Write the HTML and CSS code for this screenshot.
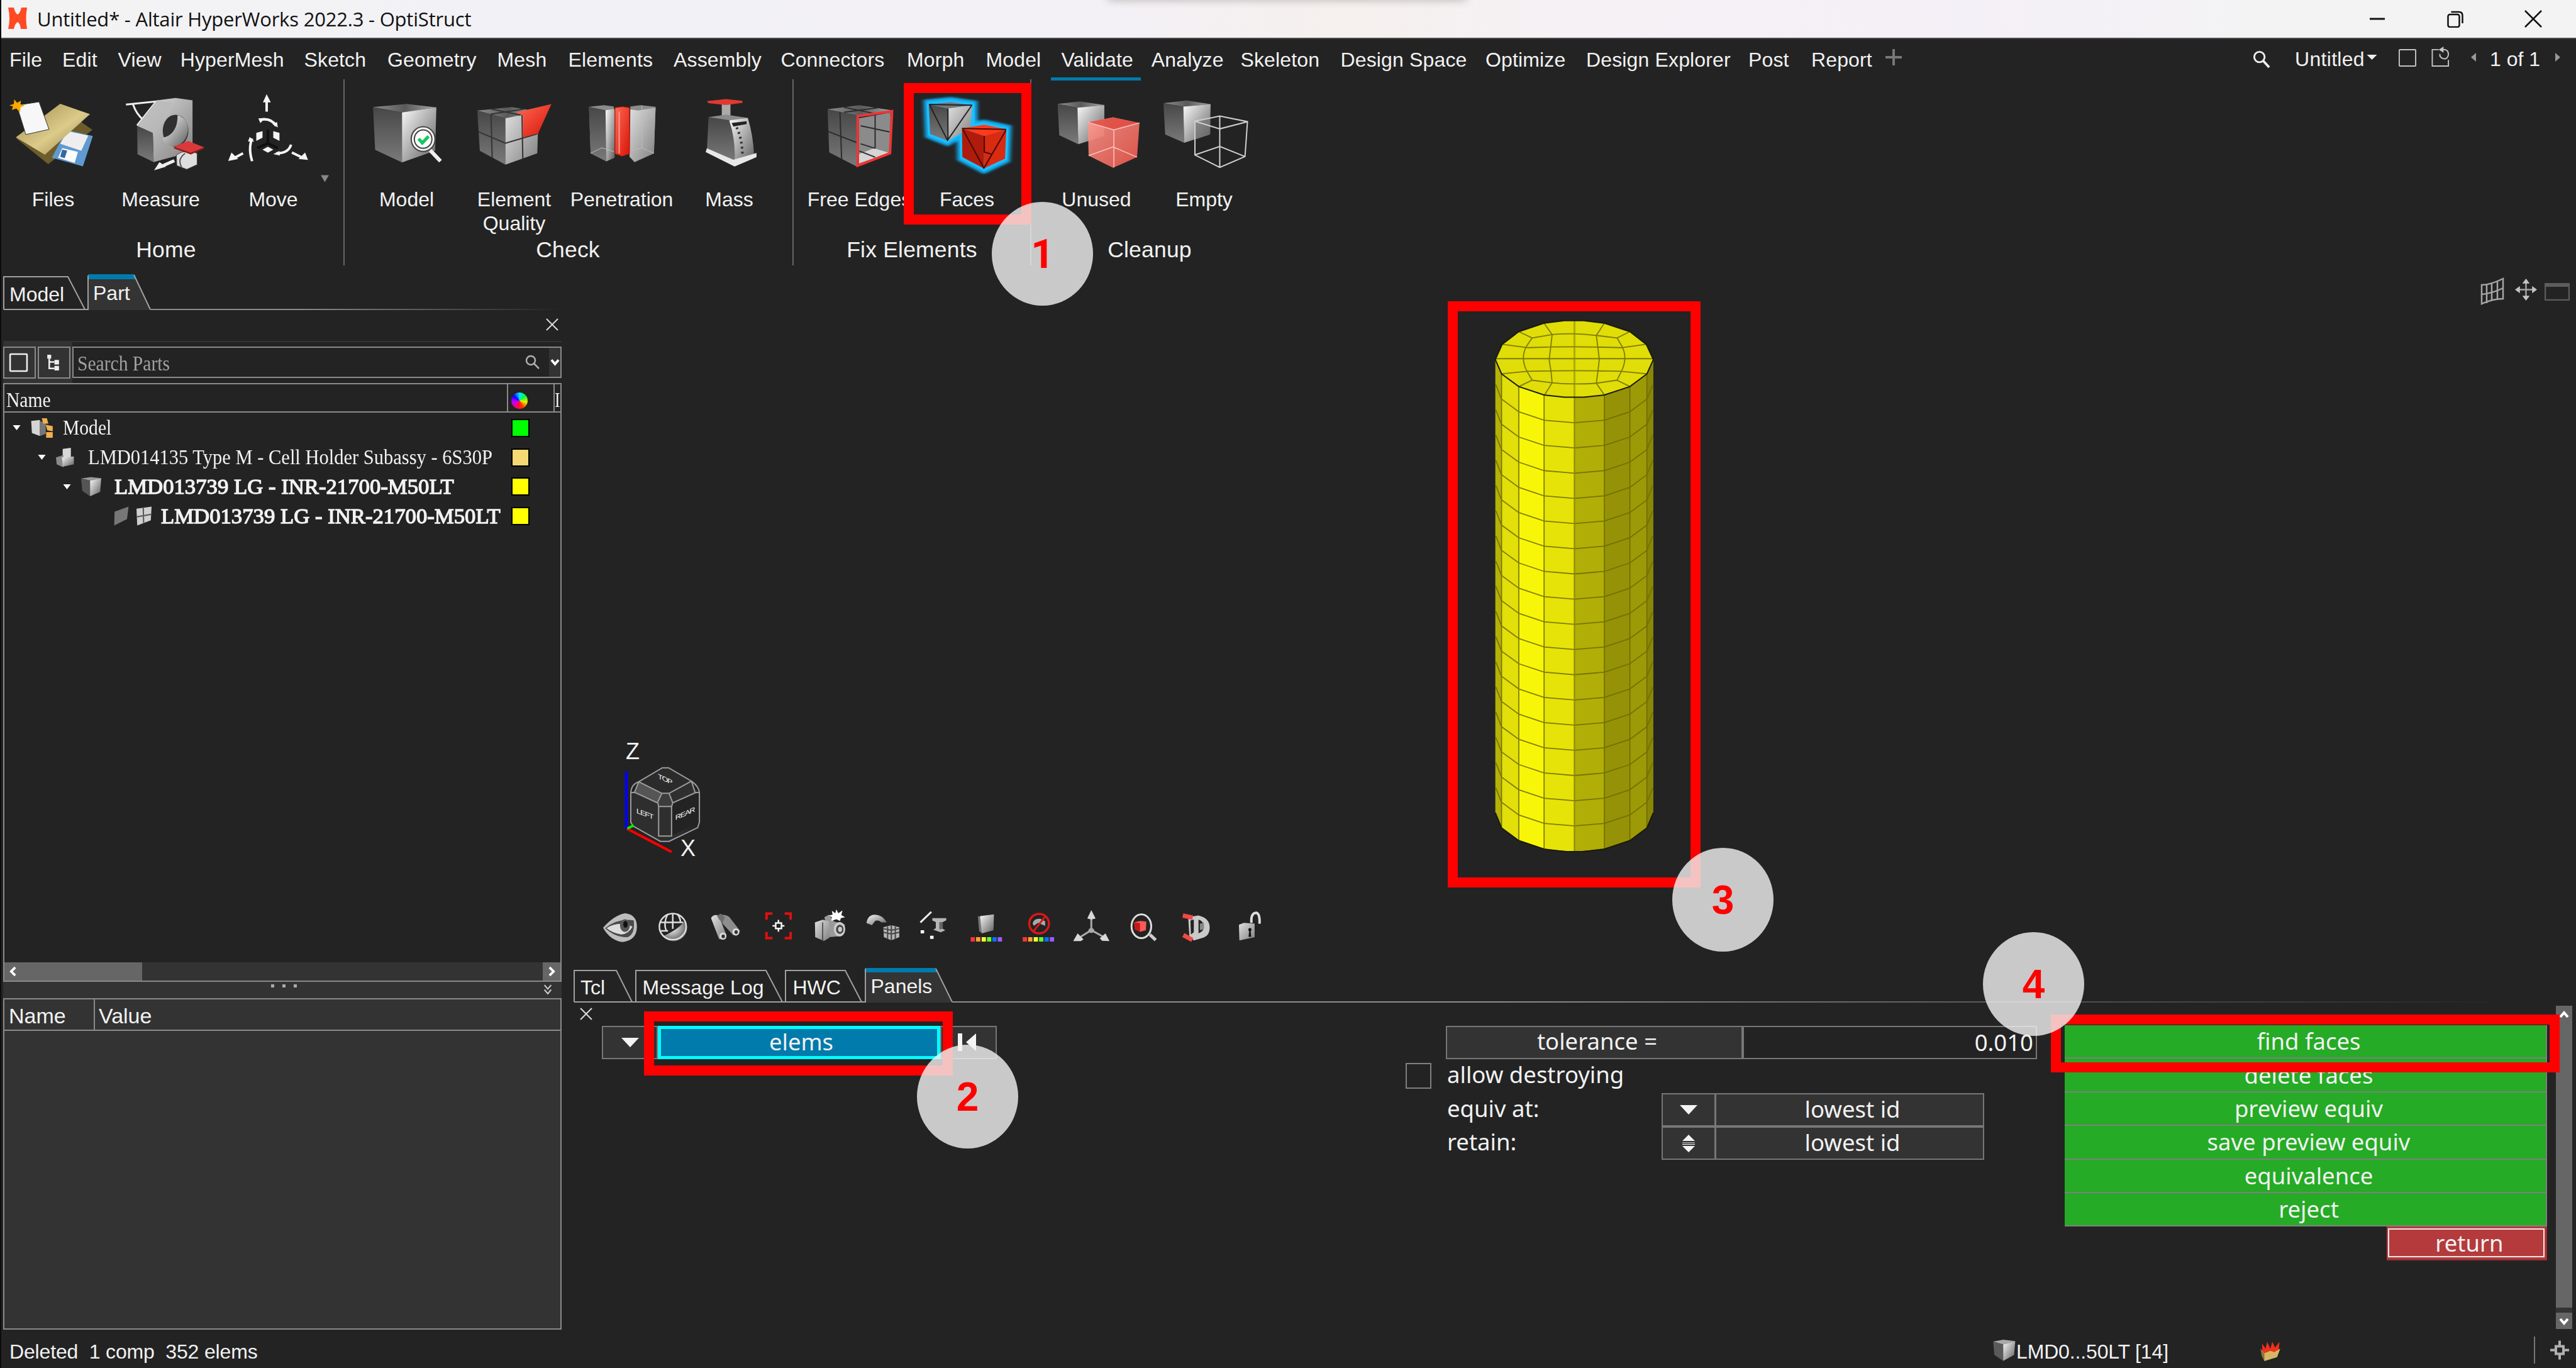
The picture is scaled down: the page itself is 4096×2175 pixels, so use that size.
FILE: index.html
```html
<!DOCTYPE html>
<html lang="en">
<head>
<meta charset="utf-8">
<title>Untitled* - Altair HyperWorks 2022.3 - OptiStruct</title>
<link rel="stylesheet" href="styles.css">
</head>
<body>
<svg class="defs" aria-hidden="true">
  <defs>
    <linearGradient id="light" x1="0" y1="0" x2="1" y2="1"><stop offset="0" stop-color="#fafafa"/><stop offset="1" stop-color="#5e5e5e"/></linearGradient>
    <linearGradient id="soft" x1="0" y1="0" x2="1" y2="1"><stop offset="0" stop-color="#e0e0e0"/><stop offset="1" stop-color="#808080"/></linearGradient>
    <linearGradient id="dark" x1="0" y1="0" x2="0" y2="1"><stop offset="0" stop-color="#474747"/><stop offset="1" stop-color="#7a7a7a"/></linearGradient>
    <linearGradient id="top" x1="0" y1="0" x2="1" y2="0"><stop offset="0" stop-color="#8e8e8e"/><stop offset=".5" stop-color="#5a5a5a"/><stop offset="1" stop-color="#a8a8a8"/></linearGradient>
    <linearGradient id="red" x1="0" y1="0" x2="1" y2="1"><stop offset="0" stop-color="#ff6a55"/><stop offset="1" stop-color="#d81408"/></linearGradient>
    <linearGradient id="pink" x1="0" y1="0" x2="1" y2="1"><stop offset="0" stop-color="#ff9a90"/><stop offset="1" stop-color="#f4584c"/></linearGradient>
    <linearGradient id="gold" x1="0" y1="0" x2="1" y2="1"><stop offset="0" stop-color="#a08a4a"/><stop offset=".55" stop-color="#dccb8a"/><stop offset="1" stop-color="#8a7538"/></linearGradient>
    <linearGradient id="fade" x1="0" y1="0" x2="1" y2="0"><stop offset="0" stop-color="#8c8c8c"/><stop offset=".35" stop-color="#8c8c8c"/><stop offset="1" stop-color="#232323"/></linearGradient>
    <radialGradient id="ball" cx=".35" cy=".35" r=".8"><stop offset="0" stop-color="#ffffff"/><stop offset="1" stop-color="#3c3c3c"/></radialGradient>
  </defs>
</svg>

<header class="titlebar">
  <svg class="app-logo" viewBox="0 0 30 34"><path d="M0 0H9Q11 9 15 11Q19 9 21 0H30Q27 17 30 34H20Q19 25 15 23Q11 25 9 34H0Q4 17 0 0Z"/></svg>
  <h1 class="app-title">Untitled* - Altair HyperWorks 2022.3 - OptiStruct</h1>
  <div class="top-tab"></div>
  <div class="window-buttons">
    <svg viewBox="0 0 28 28"><path d="M2 14H26" stroke-width="3"/></svg>
    <svg viewBox="0 0 28 28"><rect x="2.500" y="7" width="18" height="20" rx="3"/><path d="M7.500 3H20Q25.500 3 25.500 9V21"/></svg>
    <svg viewBox="0 0 28 28"><path d="M1 1L27 27M27 1L1 27"/></svg>
  </div>
</header>

<nav class="menubar">
  <ul class="menus">
    <li>File</li><li>Edit</li><li>View</li><li>HyperMesh</li><li>Sketch</li><li>Geometry</li><li>Mesh</li><li>Elements</li><li>Assembly</li><li>Connectors</li><li>Morph</li><li>Model</li><li class="active">Validate</li><li>Analyze</li><li>Skeleton</li><li>Design Space</li><li>Optimize</li><li>Design Explorer</li><li>Post</li><li>Report</li>
    <li class="add"><svg viewBox="0 0 26 26"><path d="M13 0V26M0 13H26"/></svg></li>
  </ul>
  <div class="session">
    <svg class="find" viewBox="0 0 30 30"><circle cx="11" cy="11" r="8.500"/><path d="M17 17L27 28" stroke-width="4"/></svg>
    <span class="session-name">Untitled</span>
    <svg class="tri" viewBox="0 0 16 8"><path d="M0 0H16L8 8Z"/></svg>
    <svg class="page" viewBox="0 0 30 30"><rect x="1" y="1" width="27" height="27" rx="1"/></svg>
    <svg class="page add-page" viewBox="0 0 32 34"><path d="M12 5H1.500V32H28V22M18 5Q28 4 28 13Q27 21 20 20Q13 18 14 12"/><path class="solid" d="M20 0V10L12 5Z"/></svg>
    <svg class="arrow" viewBox="0 0 8 14"><path d="M8 0V14L0 7Z"/></svg>
    <span class="page-count">1 of 1</span>
    <svg class="arrow" viewBox="0 0 8 14"><path d="M0 0V14L8 7Z"/></svg>
  </div>
</nav>

<section class="ribbon">
  <div class="group home">
    <div class="tools">
      <div class="tool">
        <svg class="ico" preserveAspectRatio="none" viewBox="-2 530 260 470">
          <path fill="#6d5c2c" d="M38 792L190 690L223 745L116 942Z"/>
          <path fill="#5f9ad0" d="M160 745L224 780L200 955L125 905Z"/><path fill="#eee" d="M163 752L213 778L196 865L145 825Z"/><path fill="#fff" d="M150 850L188 872L180 935L140 905Z"/><path fill="#356a9e" d="M150 858L162 864L156 908L145 900Z"/>
          <path fill="url(#gold)" d="M145 595L217 655L108 888L38 788Z"/>
          <path fill="#f7f7f7" stroke="#333" stroke-width="1" d="M40 604L94 584L118 742L62 772Z"/>
          <path fill="#ffa800" d="M34 570L41 590L50 577L49 598L60 605L49 615L48 645L39 622L28 630L31 610L22 603L33 597Z"/>
        </svg>
        <span>Files</span>
      </div>
      <div class="tool">
        <svg class="ico" preserveAspectRatio="none" viewBox="259 530 260 470">
          <path fill="none" stroke="#eee" stroke-width="3" d="M305 600L378 582L332 720M322 598Q330 655 348 690"/>
          <path fill="url(#soft)" d="M380 575L425 562L466 575V870L372 930L370 762L332 722Z"/>
          <path fill="url(#dark)" d="M332 722L370 762L372 930L333 885Z"/>
          <path fill="#b8b8b8" d="M380 575L332 722L370 762L415 590Z" opacity=".75"/>
          <ellipse cx="425" cy="750" rx="31" ry="92" fill="#303030"/><path fill="url(#light)" d="M430 660Q456 680 455 750Q450 830 420 840Q390 820 395 790Q430 770 430 660Z"/>
          <path fill="#dedede" stroke="#444" stroke-width="1" d="M427 890Q450 850 477 880V945L452 972L428 950Z"/><path fill="none" stroke="#555" stroke-width="2" d="M440 962Q428 915 448 880"/>
          <path fill="#d83a3a" d="M421 843L455 808L494 845L462 886Z"/><path fill="#8e1b1b" d="M421 843L462 876L494 845V853L462 886L421 852Z"/>
          <path fill="none" stroke="#eee" stroke-width="5" d="M422 922L395 950"/><path fill="#eee" d="M373 977L386 930L402 957Z"/>
        </svg>
        <span>Measure</span>
      </div>
      <div class="tool wide">
        <svg class="ico" preserveAspectRatio="none" viewBox="531 530 260 470">
          <g fill="none" stroke="#f4f4f4" stroke-width="4"><path d="M645 640V580M706 875L732 905M588 880L562 912M627 688Q655 672 668 722M610 795Q600 850 610 925M704 830Q698 880 668 880"/></g>
          <g fill="#f4f4f4"><path d="M645 540L655 587H636ZM745 918L722 912L738 875ZM552 924L560 875L576 912ZM635 752V790L620 808V762ZM661 752V790L676 808V762ZM648 842L661 859L648 876L635 859ZM672 732L659 712L670 700ZM604 786L600 812H615ZM661 884L676 866L677 892ZM625 678L640 680L630 706Z"/></g>
          <path fill="none" stroke="#101010" stroke-width="4" d="M648 745V822L622 850M648 822L672 850"/>
        </svg>
        <span>Move</span>
      </div>
      <svg class="more" viewBox="0 0 14 12"><path d="M0 0H14L7 12Z"/></svg>
    </div>
    <h2>Home</h2>
  </div>

  <div class="group check">
    <div class="tools">
      <div class="tool">
        <svg class="ico" preserveAspectRatio="none" viewBox="855 530 260 470">
          <path fill="url(#top)" d="M904 614L985 596L1057 616L974 645Z"/><path fill="url(#dark)" d="M904 614L974 645V932L909 860Z"/><path fill="url(#light)" d="M974 645L1057 616L1054 865L974 932Z"/>
          <path stroke="#eee" stroke-width="6" d="M1042 862L1067 925"/>
          <ellipse cx="1025" cy="798" rx="25" ry="62" fill="#fff" stroke="#444" stroke-width="7"/><ellipse cx="1025" cy="798" rx="25" ry="62" fill="none" stroke="#f4f4f4" stroke-width="3"/>
          <path fill="none" stroke="#14c85c" stroke-width="5" d="M1014 796L1023 820L1038 782"/>
        </svg>
        <span>Model</span>
      </div>
      <div class="tool">
        <svg class="ico" preserveAspectRatio="none" viewBox="1116 530 260 470">
          <path fill="url(#top)" d="M1157 634L1240 614L1305 640L1225 678Z"/><path fill="url(#dark)" d="M1157 634L1225 678V945L1163 865Z"/><path fill="url(#soft)" d="M1225 678L1305 640L1302 880L1225 945Z"/>
          <path fill="none" stroke="#333" stroke-width="2" d="M1190 655L1193 905M1160 756L1225 822L1302 768M1265 660L1267 912M1190 625L1262 660M1190 655L1270 625"/>
          <path fill="url(#red)" d="M1250 645L1336 597L1304 765L1267 788V660Z"/>
        </svg>
        <span>Element<br>Quality</span>
      </div>
      <div class="tool">
        <svg class="ico" preserveAspectRatio="none" viewBox="1373 530 260 470">
          <path fill="#8b8b8b" d="M1424 612L1460 603L1484 610V900L1466 926L1428 880Z"/><path fill="#8b8b8b" d="M1585 612L1549 603L1524 610V900L1534 930L1581 880Z"/>
          <path fill="url(#dark)" d="M1424 612L1464 632L1466 926L1428 880Z"/><path fill="url(#light)" d="M1464 632L1486 625V905L1466 926Z"/><path fill="url(#soft)" d="M1524 628L1543 634L1585 618L1581 880L1534 930L1522 900Z"/>
          <path fill="none" stroke="#bdbdbd" stroke-width="1" d="M1428 880L1455 848L1484 870M1581 880L1552 848L1522 870M1552 605V848"/>
          <path fill="url(#red)" stroke="#c01408" stroke-width="1" d="M1487 618L1505 612L1522 618V882L1504 896L1487 882Z"/><path stroke="#ff9d90" stroke-width="2" d="M1497 640V880"/>
        </svg>
        <span>Penetration</span>
      </div>
      <div class="tool">
        <svg class="ico" preserveAspectRatio="none" viewBox="100 449.700 260 398.500">
          <path fill="#aaa" d="M212 500H233V570H212Z"/><path fill="#e03a30" d="M176 492L222 482L262 490V500L222 511L180 502Z"/>
          <path fill="url(#dark)" d="M180 570L240 585L245 790L176 732Z"/><path fill="#8b8b8b" d="M180 570L222 558L275 574L240 588Z"/><path fill="url(#light)" d="M230 586L275 574Q288 660 290 752L243 790Q246 680 230 586Z"/>
          <path fill="#e8e8e8" d="M176 722L240 778L296 745V765L243 811L173 740Z"/>
          <path fill="#222" d="M236 598L272 590V604L240 616Z"/><path fill="none" stroke="#333" stroke-width="4" stroke-dasharray="3 5" d="M248 620Q262 680 262 762"/>
        </svg>
        <span>Mass</span>
      </div>
    </div>
    <h2>Check</h2>
  </div>

  <div class="group fix">
    <div class="tools">
      <div class="tool">
        <svg class="ico" preserveAspectRatio="none" viewBox="415 449.700 260 398.500">
          <path fill="url(#top)" d="M468 532L545 512L627 538L540 562Z"/><path fill="url(#dark)" d="M468 532L540 562V812L472 742Z"/><path fill="#8b8b8b" d="M544 575L620 548V745L544 800Z"/><path fill="#d5d5d5" d="M544 795V750L580 722L618 745Z"/>
          <path fill="none" stroke="#2c2c2c" stroke-width="2" d="M498 545L502 775M470 640L540 695M583 560V722M548 612L618 642M545 735L583 765M508 522L580 552M508 546L590 524M583 722L548 700"/>
          <path fill="none" stroke="#ef3434" stroke-width="4" d="M541 565L624 541L619 746L541 806Z"/>
        </svg>
        <span>Free Edges</span>
      </div>
      <div class="tool">
        <svg class="ico" preserveAspectRatio="none" viewBox="674 449.700 260 398.500">
          <g class="glow"><path d="M712 508L765 497L817 512V610L757 685L715 652Z"/><path d="M792 625L846 607L899 630L896 772L845 820L793 765Z"/></g>
          <path class="rim" d="M712 508L765 497L817 512V610L757 685L715 652Z"/><path class="rim" d="M792 625L846 607L899 630L896 772L845 820L793 765Z"/>
          <path fill="#777" d="M712 508L765 497L817 512L758 528Z"/><path fill="url(#dark)" d="M712 508L758 528L757 685L715 652Z"/><path fill="url(#soft)" d="M758 528L817 512L812 625L757 685Z"/>
          <path fill="none" stroke="#222" stroke-width="2" d="M714 512L757 683L815 515M758 528V680M712 508L817 512"/>
          <path fill="#ff3a1a" d="M792 625L846 607L899 630L846 662Z"/><path fill="#b01c0c" d="M792 625L846 662L845 820L793 765Z"/><path fill="#d92a12" d="M846 662L899 630L896 772L845 820Z"/>
          <path fill="none" stroke="#450a04" stroke-width="2" d="M794 630L845 818L898 635M792 625L899 630M846 662V740L866 752"/>
        </svg>
        <span>Faces</span>
      </div>
    </div>
    <h2>Fix Elements</h2>
  </div>

  <div class="group cleanup">
    <div class="tools">
      <div class="tool">
        <svg class="ico" preserveAspectRatio="none" viewBox="990 449.700 260 398.500">
          <path fill="url(#top)" d="M1026 506L1080 493L1139 511L1074 524Z"/><path fill="url(#dark)" d="M1026 506L1074 524L1076 702L1030 658Z"/><path fill="url(#light)" d="M1074 524L1139 511V662L1076 702Z"/>
          <path fill="url(#pink)" opacity=".88" d="M1099 595L1160 571L1224 598L1218 765L1160 817L1101 758Z"/><path fill="#e04a40" d="M1099 595L1160 571L1224 598L1162 632Z" opacity=".8"/>
          <path fill="none" stroke="#ffc4be" stroke-width="1.500" d="M1099 595L1162 632L1224 598M1162 632V815M1101 758L1160 715L1218 765"/>
        </svg>
        <span>Unused</span>
      </div>
      <div class="tool">
        <svg class="ico" preserveAspectRatio="none" viewBox="1250 449.700 260 398.500">
          <path fill="url(#top)" d="M1282 502L1338 489L1396 507L1330 519Z"/><path fill="url(#dark)" d="M1282 502L1330 519L1332 695L1286 654Z"/><path fill="url(#light)" d="M1330 519L1396 507L1394 655L1332 695Z"/>
          <path fill="#6668" d="M1358 592L1396 575V652L1358 680Z"/>
          <path fill="none" stroke="#cfcfcf" stroke-width="2" d="M1358 590L1418 565L1485 592L1479 762L1418 815L1358 754ZM1358 590L1418 627L1485 592M1418 565V815M1358 754L1418 713L1479 762"/>
        </svg>
        <span>Empty</span>
      </div>
    </div>
    <h2>Cleanup</h2>
  </div>
</section>

<main class="workspace">
  <aside class="browser">
    <div class="tabs side-tabs">
      <svg class="tab-shape" viewBox="0 0 888 58"><path fill="#343434" d="M135 3H210L234 57H135Z"/><path fill="#007bab" d="M135 0H208L211 8H135Z"/><path class="edge" d="M1 56V4H103L130 56M1 56H135V2M208 1L234 56"/><rect x="234" y="55" width="654" height="2" fill="url(#fade)"/></svg>
      <div class="tab-labels"><span class="t-model">Model</span><span class="t-part">Part</span></div>
    </div>
    <div class="close-row"><svg class="close" viewBox="0 0 20 20"><path d="M1 1L19 19M19 1L1 19"/></svg></div>
    <div class="search-row">
      <div class="mini-buttons">
        <button class="mini"><svg viewBox="0 0 30 30"><rect x="2" y="2" width="26" height="26" rx="1"/></svg></button>
        <button class="mini"><svg viewBox="0 0 30 30"><path class="solid" d="M6 3H12V9H6ZM17 11H24V18H17ZM17 20H24V27H17Z"/><path d="M9 9V24H17M9 14H17"/></svg></button>
      </div>
      <div class="search-box">
        <span class="serif search-hint">Search Parts</span>
        <svg class="find" viewBox="0 0 24 24"><circle cx="9" cy="9" r="7"/><path d="M14 14L22 22"/></svg>
        <span class="drop"><svg viewBox="0 0 16 12"><path d="M2 2L8 9L14 2"/></svg></span>
      </div>
    </div>
    <div class="tree">
      <div class="tree-head"><span class="serif col-name">Name</span><span class="col-color"><i class="wheel"></i></span><span class="col-more serif">I</span></div>
      <ul class="tree-rows">
        <li class="lv0">
          <svg class="caret" viewBox="0 0 12 8"><path d="M0 0H12L6 8Z"/></svg>
          <svg class="ico w36" preserveAspectRatio="none" viewBox="83 862 62 110"><path fill="#d4d4d4" d="M84 877L108 872V962L86 945Z"/><path fill="#777" d="M108 876L124 890V950L108 962Z"/><path fill="#f0b04e" d="M113 862H127L131 892H117ZM124 898L143 906V936L128 930ZM125 940H143V972H125Z"/></svg>
          <span class="serif name">Model</span><i class="swatch green"></i></li>
        <li class="lv1">
          <svg class="caret" viewBox="0 0 12 8"><path d="M0 0H12L6 8Z"/></svg>
          <svg class="ico w29" preserveAspectRatio="none" viewBox="158 1030 49 112"><path fill="#d8d8d8" d="M176 1036L198 1030V1085L176 1090Z"/><path fill="#8a8a8a" d="M158 1085L178 1072V1142L160 1125Z"/><path fill="url(#light)" d="M174 1085L206 1080V1125L176 1138Z"/></svg>
          <span class="serif name long">LMD014135 Type M - Cell Holder Subassy - 6S30P</span><i class="swatch sand"></i></li>
        <li class="lv2">
          <svg class="caret" viewBox="0 0 12 8"><path d="M0 0H12L6 8Z"/></svg>
          <svg class="ico w32" preserveAspectRatio="none" viewBox="226 1200 54 110"><path fill="#999" d="M226 1210L252 1202L280 1208L252 1222Z"/><path fill="#555" d="M226 1210L250 1222V1310L229 1280Z"/><path fill="url(#light)" d="M250 1222L280 1208L277 1285L250 1310Z"/></svg>
          <span class="serif name strong">LMD013739 LG - INR-21700-M50LT</span><i class="swatch yellow"></i></li>
        <li class="lv3">
          <svg class="ico w24" preserveAspectRatio="none" viewBox="310 1370 40 110"><path fill="#777" d="M312 1400L349 1372L345 1442L311 1478Z"/></svg>
          <svg class="ico w24" preserveAspectRatio="none" viewBox="373 1375 40 105"><path fill="#cfcfcf" d="M373 1388L413 1377L411 1450L375 1478Z"/><path stroke="#555" stroke-width="2" d="M374 1432L412 1418M391 1383L392 1465"/></svg>
          <span class="serif name strong">LMD013739 LG - INR-21700-M50LT</span><i class="swatch yellow"></i></li>
      </ul>
      <div class="hscroll"><span class="thumb"><svg viewBox="0 0 12 16"><path d="M9 2L3 8L9 14"/></svg></span><span class="end"><svg viewBox="0 0 12 16"><path d="M3 2L9 8L3 14"/></svg></span></div>
    </div>
    <div class="splitter"><span></span><span class="dots"><i></i><i></i><i></i></span><svg viewBox="0 0 12 16"><path d="M1 1L6 7L11 1M1 8L6 14L11 8"/></svg></div>
    <div class="props"><div class="props-head"><span>Name</span><span>Value</span></div></div>
  </aside>

  <section class="stage">
    <div class="viewport">
      <div class="view-tools">
        <svg class="vt-grid" viewBox="0 0 38 44"><path d="M2 12Q16 12 36 2V34Q20 34 2 42ZM10 11V41M18 9V37M27 6V35M2 27Q20 25 36 17"/></svg>
        <svg class="vt-move" viewBox="0 0 36 36"><path d="M18 4V32M4 18H32"/><path class="solid" d="M18 0L24 8H12ZM18 36L24 28H12ZM0 18L8 12V24ZM36 18L28 12V24Z"/></svg>
        <svg class="vt-win" viewBox="0 0 40 28"><rect x="1" y="1" width="38" height="26"/><path class="solid" d="M0 0H40V6H0Z"/></svg>
      </div>

      <svg class="triad" viewBox="200 30 340 580" preserveAspectRatio="none">
        <path fill="#2e2e2e" d="M245 290L365 172H397L519 290V430L400 520H362L245 435Z"/>
        <path fill="#2b2b2b" d="M275 238L370 172H395L487 235L397 293H368Z"/><path fill="#555" d="M275 238L368 293L350 338L258 288Z"/><path fill="#232323" d="M411 340L519 288V435L407 492Z"/><path fill="#2f2f2f" d="M487 235L502 290L411 338L397 293Z"/><path fill="#3c3c3c" d="M368 293H397L412 340V355H352V340Z"/>
        <path class="wire" d="M275 238L370 172H395L487 235L397 293H368ZM275 238L258 288L350 338L368 293M397 293L412 338L502 290L487 235M275 238Q245 250 243 290V430L253 448L362 520H397L512 455L519 430V290Q518 262 487 235M352 338L355 355H407L412 338M355 355V495H407V355M243 290L258 288M502 290L519 288"/>
        <g class="cube-text"><text transform="translate(352 222) skewY(28)">TOP</text><text transform="translate(266 386) skewY(24)">LEFT</text><text transform="translate(422 420) skewY(-28)">REAR</text></g>
        <path stroke="#0000ff" stroke-width="4.500" d="M225 190V460"/><path stroke="#ff0000" stroke-width="4" d="M228 460L407 570"/><path stroke="#00f000" stroke-width="4" stroke-linecap="round" d="M233 457L251 447"/>
      </svg>
      <span class="axis axis-z">Z</span><span class="axis axis-x">X</span>

      <svg class="cell" viewBox="260 50 710 1290" preserveAspectRatio="none">
        <defs><path id="ring" d="M272 158L297 192L372 222L482 242L614 248L744 242L855 222L929 192L955 158"/></defs>
        <path fill="#b5b208" d="M270 158L297 192V1266L270 1230Z"/><path fill="#e2df0a" d="M297 192L372 222V1296L297 1266Z"/><path fill="#f8f608" d="M372 222L482 242V1316L372 1296Z"/><path fill="#e6e308" d="M482 242L614 248V1322L482 1316Z"/><path fill="#b1ae08" d="M614 248L744 242V1316L614 1322Z"/><path fill="#959207" d="M744 242L855 222V1296L744 1316Z"/><path fill="#9d9a07" d="M855 222L929 192V1266L855 1296Z"/><path fill="#8a8707" d="M929 192L957 158V1230L929 1266Z"/>
        <path fill="#e0dd08" d="M270 158L300 122L372 92L482 72L570 66H655L744 72L855 92L926 122L957 158L929 192L855 222L744 242L655 247H570L482 242L372 222L297 192Z"/>
        <g class="mesh">
          <use href="#ring" y="59.600"/><use href="#ring" y="119.200"/><use href="#ring" y="178.800"/><use href="#ring" y="238.400"/><use href="#ring" y="298"/><use href="#ring" y="357.600"/><use href="#ring" y="417.200"/><use href="#ring" y="476.800"/><use href="#ring" y="536.400"/><use href="#ring" y="596"/><use href="#ring" y="655.600"/><use href="#ring" y="715.200"/><use href="#ring" y="774.800"/><use href="#ring" y="834.400"/><use href="#ring" y="894"/><use href="#ring" y="953.600"/><use href="#ring" y="1013.200"/>
          <path d="M297 192V1266M372 222V1296M482 242V1316M744 242V1316M855 222V1296M929 192V1266"/>
          <path d="M272 156H955M300 122L412 130Q614 126 818 130L926 122M297 192L408 186Q614 183 818 186L929 192M372 92L430 107L517 99Q614 94 709 101L799 107L855 92M372 222L430 207L517 213Q614 218 709 214L799 207L855 222M482 72L517 99L511 128L504 158L512 186L517 213L484 242M744 72L709 101L716 130L722 158L716 186L709 214L744 242M430 107L404 128Q378 156 408 186L430 207M799 107L822 128Q846 156 818 186L799 207"/>
        </g>
        <path fill="none" stroke="#8c8a08" stroke-width="3" opacity=".6" d="M614 66V1322"/>
        <path fill="none" stroke="#1a1a08" stroke-width="2" d="M270 158L300 122L372 92L482 72L570 66H655L744 72L855 92L926 122L957 158L929 192L855 222L744 242L655 247H570L482 242L372 222L297 192ZM270 1230L297 1266L372 1296L482 1316L570 1322H655L744 1316L855 1296L929 1266L957 1230"/>
      </svg>

      <div class="view-bar">
        <svg class="ico" preserveAspectRatio="none" viewBox="96.700 820 211.200 200"><path fill="#bdbdbd" d="M132 930Q180 868 222 862Q268 870 268 925Q268 990 210 998Q160 990 132 930Z"/><path fill="#4a4a4a" d="M140 932Q190 885 255 895Q262 960 230 975Q180 975 140 932Z"/><path fill="#ddd" d="M146 932Q195 895 250 925Q235 960 205 962Q170 955 146 932Z"/><ellipse cx="220" cy="920" rx="20" ry="30" fill="#555"/><ellipse cx="222" cy="914" rx="9" ry="16" fill="#111"/></svg>
        <svg class="ico" preserveAspectRatio="none" viewBox="307.900 820 211.200 200"><ellipse cx="411" cy="925" rx="54" ry="62" fill="#232323"/><path fill="url(#ball)" d="M458 895A54 62 0 0 1 372 970Q440 935 458 895Z"/><ellipse cx="411" cy="925" rx="54" ry="62" fill="none" stroke="#ddd" stroke-width="2.500"/><path fill="none" stroke="#ddd" stroke-width="2.500" d="M360 905H452M411 863V935M390 866Q372 910 385 945M430 866Q442 885 442 905M362 945H392"/></svg>
        <svg class="ico" preserveAspectRatio="none" viewBox="519 820 211.200 200"><path fill="url(#soft)" d="M566 885Q575 865 597 872L628 965Q615 990 598 983Z"/><path fill="#8e8e8e" d="M605 868Q630 868 640 880L683 945Q670 968 655 965L612 910Z"/><path fill="#6e6e6e" d="M590 872L606 864L622 880L612 908L598 890Z"/><ellipse cx="614" cy="970" rx="14" ry="17" fill="#ddd"/><ellipse cx="615" cy="971" rx="7" ry="9" fill="#333"/><ellipse cx="666" cy="950" rx="14" ry="17" fill="#ddd"/><ellipse cx="667" cy="951" rx="7" ry="9" fill="#333"/></svg>
        <svg class="ico" preserveAspectRatio="none" viewBox="730.300 820 211.200 200"><path fill="none" stroke="#e01010" stroke-width="4" d="M788 892V863H812M861 863H885V892M788 950V979H812M861 979H885V950"/><path fill="none" stroke="#f4f4f4" stroke-width="2.500" d="M825 908H848V934H825ZM836 893V908M836 934V949M812 921H825M848 921H860"/></svg>
        <svg class="ico" preserveAspectRatio="none" viewBox="941.500 820 211.200 200"><path fill="#9a9a9a" d="M1022 880L1040 868L1060 900L1105 915L1085 970L1040 975Z"/><path fill="url(#soft)" d="M984 905L1015 892L1042 900V978L1020 993L985 975Z"/><path stroke="#3a3a3a" stroke-width="1.500" d="M1015 905V990"/><ellipse cx="1083" cy="937" rx="23" ry="34" fill="#ccc"/><ellipse cx="1084" cy="938" rx="15" ry="22" fill="#444"/><ellipse cx="1085" cy="938" rx="8" ry="12" fill="#ccc"/><path fill="#fff" d="M1070 843L1078 862L1095 848L1090 870L1105 880L1088 885L1085 898L1070 890L1050 898L1052 880L1040 872L1055 868L1052 850L1066 862Z"/></svg>
        <svg class="ico" preserveAspectRatio="none" viewBox="1152.700 820 211.200 200"><path fill="url(#light)" d="M1190 908Q1195 868 1225 868Q1255 870 1272 905L1250 905Q1240 892 1226 897L1212 918Z"/><path fill="#b5b5b5" d="M1258 928L1290 918L1322 928V975L1290 990L1260 975Z"/><path fill="none" stroke="#444" stroke-width="2" d="M1258 952L1290 960L1322 952M1275 925V985M1306 925V985M1290 918V990M1258 935L1290 942L1322 935"/></svg>
        <svg class="ico" preserveAspectRatio="none" viewBox="1363.800 820 211.200 200"><path stroke="#eee" stroke-width="3" d="M1408 905L1452 855"/><path fill="#fff" d="M1409 942H1423V957H1409ZM1447 968H1461V983H1447Z"/><path fill="#b5b5b5" d="M1456 885H1512V895L1498 903V935L1508 942L1490 952L1460 940L1470 932V903L1456 896Z"/><path fill="#666" d="M1484 903H1498V935L1484 938Z"/></svg>
        <svg class="ico" preserveAspectRatio="none" viewBox="160.200 46.800 234.600 260"><path fill="#777" d="M230 118L246 124L248 225L236 210Z"/><path fill="url(#light)" d="M240 118L302 108L300 205L248 225Z"/><path fill="#ff3535" d="M198 248H217V275H198Z"/><path fill="#ffa030" d="M222 248H241V275H222Z"/><path fill="#ffff30" d="M247 248H266V275H247Z"/><path fill="#60ff30" d="M271 248H290V275H271Z"/><path fill="#0a70ff" d="M295 248H314V275H295Z"/><path fill="#9a5cff" d="M319 248H338V275H319Z"/></svg>
        <svg class="ico" preserveAspectRatio="none" viewBox="394.800 46.800 234.600 260"><path fill="#aaa" d="M476 165Q480 132 510 135L532 150V178L500 160L482 178Z"/><ellipse cx="505" cy="165" rx="44" ry="60" fill="none" stroke="#d81818" stroke-width="3.500"/><path stroke="#d81818" stroke-width="3" d="M533 120L480 212"/><path fill="#ff3535" d="M432 248H451V275H432Z"/><path fill="#ffa030" d="M456 248H475V275H456Z"/><path fill="#ffff30" d="M481 248H500V275H481Z"/><path fill="#60ff30" d="M505 248H524V275H505Z"/><path fill="#0a70ff" d="M529 248H548V275H529Z"/><path fill="#9a5cff" d="M553 248H572V275H553Z"/></svg>
        <svg class="ico" preserveAspectRatio="none" viewBox="629.500 46.800 234.600 260"><path fill="none" stroke="#aaa" stroke-width="3" d="M737 120V205L690 245M737 205L790 245"/><path fill="#d8d8d8" d="M737 82L756 133L737 140L719 133ZM656 272L676 225L702 262L690 272ZM818 272L800 225L775 255L785 270Z"/><ellipse cx="737" cy="207" rx="13" ry="15" fill="#aaa"/></svg>
        <svg class="ico" preserveAspectRatio="none" viewBox="864.100 46.800 234.600 260"><path stroke="#ccc" stroke-width="5" d="M1000 232L1026 266"/><ellipse cx="962" cy="181" rx="44" ry="73" fill="none" stroke="#ddd" stroke-width="3"/><path fill="#ff5a55" d="M930 156L958 148L984 152L982 205L956 215L932 200Z"/><path fill="#c41818" d="M930 156L956 162V215L932 200Z"/></svg>
        <svg class="ico" preserveAspectRatio="none" viewBox="1098.800 46.800 234.600 260"><path fill="#c9c9c9" fill-rule="evenodd" d="M1170 125L1215 115Q1266 130 1266 190Q1266 235 1240 250L1195 268L1175 240ZM1180 145L1195 140V218L1182 232ZM1216 140Q1240 150 1240 185Q1240 210 1216 225Z"/><path fill="#888" d="M1222 165L1240 160V200L1222 205Z"/><path stroke="#ef4a44" stroke-width="7" d="M1146 115L1190 128M1148 235L1188 265"/></svg>
        <svg class="ico" preserveAspectRatio="none" viewBox="1333.400 46.800 234.600 260"><path fill="none" stroke="#ddd" stroke-width="4" d="M1454 160Q1450 100 1475 98Q1492 102 1490 165"/><path fill="url(#soft)" d="M1398 172L1420 160L1468 165V248L1400 268Z"/><ellipse cx="1447" cy="202" rx="7" ry="10" fill="#111"/><path fill="#111" d="M1444 205H1450L1453 246H1441Z"/></svg>
      </div>
    </div>

    <div class="tabs panel-tabs">
      <svg class="tab-shape" viewBox="0 0 3160 56"><path fill="#343434" d="M465 3H577L602 55H465Z"/><path fill="#007bab" d="M465 0H577L580 7H465Z"/><path class="edge" d="M2 54V4H69L94 54M100 54V4H307L333 54M338 54V4H433L459 54M2 54H465V1M577 1L603 54"/><rect x="603" y="53" width="2480" height="2" fill="url(#fade)"/></svg>
      <div class="tab-labels"><span class="t-tcl">Tcl</span><span class="t-log">Message Log</span><span class="t-hwc">HWC</span><span class="t-panels">Panels</span></div>
    </div>

    <div class="panel">
      <svg class="close" viewBox="0 0 20 20"><path d="M1 1L19 19M19 1L1 19"/></svg>
      <div class="selector">
        <span class="cellbox pick"><svg viewBox="0 0 28 15"><path d="M0 0H28L14 15Z"/></svg></span>
        <span class="cellbox entity">elems</span>
        <span class="cellbox reset"><svg viewBox="0 0 32 28"><path d="M1 0H8V28H1ZM30 0V28L14 14Z"/></svg></span>
      </div>
      <div class="params">
        <div class="row tol"><span class="cellbox">tolerance =</span><span class="cellbox value">0.010</span></div>
        <div class="row destroy"><i class="checkbox"></i><span>allow destroying</span></div>
        <div class="row opt"><span class="caption">equiv at:</span><span class="cellbox sel"><svg viewBox="0 0 28 15"><path d="M0 0H28L14 15Z"/></svg></span><span class="cellbox pickval">lowest id</span></div>
        <div class="row opt"><span class="caption">retain:</span><span class="cellbox sel"><svg class="toggle" viewBox="0 0 20 28"><path d="M10 0L20 10H0ZM0 12.500H20V13.500H0ZM0 15H20V16H0ZM0 18H20L10 28Z"/></svg></span><span class="cellbox pickval">lowest id</span></div>
      </div>
      <div class="actions">
        <button>find faces</button><button>delete faces</button><button>preview equiv</button><button>save preview equiv</button><button>equivalence</button><button>reject</button><button class="return"><span>return</span></button>
      </div>
      <div class="vscroll"><span class="track"><svg viewBox="0 0 16 12"><path d="M2 10L8 3L14 10"/></svg></span><span class="down"><svg viewBox="0 0 16 12"><path d="M2 2L8 9L14 2"/></svg></span></div>
    </div>
  </section>
</main>

<footer class="status">
  <span class="message">Deleted  1 comp  352 elems</span>
  <div class="current">
    <svg class="ico" preserveAspectRatio="none" viewBox="108 1466 58 80"><path fill="#aaa" d="M110 1475L135 1468L165 1473L135 1485Z"/><path fill="#5a5a5a" d="M110 1475L135 1485V1543L113 1522Z"/><path fill="url(#light)" d="M135 1485L165 1473L162 1522L135 1543Z"/></svg>
    <span>LMD0...50LT [14]</span>
  </div>
  <svg class="ico fire" preserveAspectRatio="none" viewBox="778 1473 54 73"><path fill="#f0301c" d="M785 1512L784 1482L793 1500L797 1476L805 1500L810 1476L817 1496L828 1476L826 1508L795 1520Z"/><path fill="#d4b766" d="M780 1500L790 1516L805 1508L815 1512L830 1500L822 1530L790 1544Z"/><path fill="#8c7433" d="M780 1500L790 1518V1544L783 1525Z"/></svg>
  <svg class="cross" viewBox="0 0 30 30"><path d="M9 9H21V21H9ZM15 0V9M15 21V30M0 15H9M21 15H30"/></svg>
</footer>

<div class="mark box1"></div><div class="mark box2"></div><div class="mark box3"></div><div class="mark box4"></div>
<div class="step step1">1</div><div class="step step2">2</div><div class="step step3">3</div><div class="step step4">4</div>
</body>
</html>
```
FILE: styles.css
```css
* { box-sizing: border-box; margin: 0; padding: 0; }
html, body { width: 4096px; height: 2175px; overflow: hidden; }
body {
  display: flex; flex-direction: column; position: relative;
  background: #232323; color: #f2f2f2;
  font: 32px "Liberation Sans", Arial, sans-serif;
  border-left: 2px solid #0c0c0c;
}
body > * { flex: none; }
ul { list-style: none; }
svg { display: block; flex: none; fill: none; }
button { font: inherit; color: inherit; border: 0; background: none; }
i { display: block; }
.defs { width: 0; height: 0; position: absolute; }
.ico { overflow: visible; }
.ico * { vector-effect: non-scaling-stroke; }

/* title bar */
.titlebar {
  height: 62px; display: flex; align-items: center; padding-left: 11px; position: relative;
  border-bottom: 2px solid #4a4a4a;
  background: linear-gradient(90deg, #f3f3f3 0, #f2f1f6 22%, #f3f1f6 43%, #f6f0ee 52%, #f5f1f4 60%, #f4f0f7 76%, #f3f3f3 90%);
}
.app-logo { width: 30px; height: 34px; fill: #ff4a24; margin-top: -2px; }
.app-title { font: 31px/60px "Open Sans", "Noto Sans", sans-serif; letter-spacing: -.2px; color: #111; margin-left: 16px; white-space: nowrap; }
.top-tab { position: absolute; left: 1760px; top: -14px; width: 570px; height: 14px; box-shadow: 0 0 14px #b8b2b2; background: #e6e2e2; }
.window-buttons { display: flex; gap: 96px; margin-left: auto; margin-right: 54px; }
.window-buttons svg { width: 28px; height: 28px; stroke: #111; stroke-width: 2.500px; }

/* menu bar */
.menubar { height: 64px; display: flex; justify-content: space-between; }
.menus {
  display: grid; padding-left: 13px; line-height: 62px; padding-top: 2px; white-space: nowrap;
  grid-template-columns: 84px 88.500px 99.200px 196.800px 132.500px 174.500px 113px 167.500px 170.400px 200.600px 125.500px 120px 143.300px 141.700px 159px 230.500px 160px 258px 100px 118px 30px;
  letter-spacing: .15px;
}
.menus .active { height: 62px; line-height: 62px; }
.menus .active::after { content: ""; display: block; width: 143px; height: 5px; margin: -3px 0 0 -16px; background: #007bab; }
.menus .add { padding-top: 14px; }
.menus .add svg { width: 26px; height: 26px; stroke: #777; stroke-width: 4px; }
.session { display: flex; align-items: center; padding-right: 25px; }
.session svg { stroke: #c4c4c4; stroke-width: 2px; }
.session .find { width: 29px; height: 29px; stroke: #eee; stroke-width: 3px; margin-right: 38px; }
.session .tri { width: 17px; height: 8px; fill: #eee; stroke: none; margin: -6px 34px 0 3px; }
.session .page { width: 29px; height: 29px; margin-top: -3px; }
.session .add-page { width: 31px; height: 33px; margin-left: 23px; margin-top: -7px; }
.solid { fill: #c4c4c4; stroke: none; }
.session .arrow { width: 8px; height: 14px; fill: #999; stroke: none; margin-top: -6px; }
.session .add-page + .arrow { margin-left: 32px; }
.page-count { margin: 0 24px 0 22px; }
.session-name { letter-spacing: .3px; }

/* ribbon */
.ribbon { height: 301px; display: flex; }
.group { height: 296px; border-right: 2px solid #666; display: flex; flex-direction: column; }
.group h2 { font: 35.500px/42px "Liberation Sans", Arial, sans-serif; letter-spacing: .2px; text-align: center; }
.tools { height: 250px; padding-top: 21px; display: flex; }
.tool { width: 171px; flex: none; text-align: center; line-height: 38.700px; white-space: nowrap; }
.tool .ico { width: 171px; height: 130px; margin: 0 auto 20.500px; }
.tool.wide { width: 187px; margin-right: -18px; }
.more { width: 13px; height: 12px; fill: #888; margin-top: 131px; }
.home { width: 546px; }
.home .tools { margin-left: -3px; }
.home h2 { padding-right: 20px; }
.check { width: 714px; padding-left: 13px; }
.check h2 { padding-right: 15px; }
.fix { width: 378px; padding-left: 19px; }
.fix h2 { padding-right: 19px; }
.cleanup { border: 0; padding-left: 18px; }
.cleanup h2 { padding-right: 2px; }
.glow { filter: blur(5px); }
.glow path { stroke: #12b0f5; stroke-width: 16px; fill: #12b0f5; }
.rim { stroke: #1cc0ff; stroke-width: 7px; fill: #1cc0ff; stroke-linejoin: round; }

/* workspace */
.workspace { height: 1691px; display: flex; }
.browser { width: 891px; margin-right: 18px; padding-left: 3px; display: flex; flex-direction: column; flex: none; }
.browser > * { flex: none; }
.tabs { display: grid; }
.tabs > * { grid-area: 1 / 1; }
.tab-shape .edge { stroke: #a0a0a0; stroke-width: 2px; }
.side-tabs { margin-top: 9px; height: 58px; }
.side-tabs .tab-shape { width: 888px; height: 58px; }
.tab-labels { display: flex; white-space: nowrap; }
.side-tabs .tab-labels { line-height: 64px; padding-left: 10px; }
.t-model { width: 133px; }
.t-part { line-height: 60px; }
.close-row { height: 50px; border-bottom: 2px solid #333; display: flex; justify-content: flex-end; padding: 12px 5px 0 0; }
.close { width: 20px; height: 20px; stroke: #ddd; stroke-width: 2px; }
.search-row { height: 65px; display: flex; }
.mini-buttons { background: #333; width: 110px; display: flex; gap: 3px; padding-top: 7px; }
.mini { width: 52px; height: 51px; border: 2px solid #8a8a8a; display: flex; align-items: center; justify-content: center; }
.mini svg { width: 31px; height: 31px; stroke: #eee; stroke-width: 2.500px; margin-left: -3px; }
.mini .solid { fill: #eee; }
.search-box { margin-top: 7px; width: 778px; height: 50px; border: 2px solid #8a8a8a; display: flex; align-items: center; }
.serif { font-family: "Liberation Serif", "Times New Roman", serif; font-size: 34px; transform-origin: 0 50%; transform: scaleX(.87); white-space: nowrap; }
.search-hint { color: #a0a0a0; margin: 4px 0 0 6px; }
.search-box .find { width: 24px; height: 24px; stroke: #b0b0b0; stroke-width: 2.500px; margin-left: auto; margin-right: 14px; }
.drop { width: 18px; align-self: stretch; background: #333; display: flex; align-items: center; justify-content: center; }
.drop svg { width: 15px; height: 12px; stroke: #fff; stroke-width: 4px; }
.tree { border: 2px solid #8a8a8a; height: 952px; display: flex; flex-direction: column; }
.tree-head { height: 45px; border-bottom: 2px solid #8a8a8a; display: flex; line-height: 50px; flex: none; }
.col-name { margin-left: 3px; }
.col-color { width: 76px; margin-left: auto; border-left: 2px solid #8a8a8a; border-right: 2px solid #8a8a8a; padding: 13px 0 0 5px; }
.wheel { width: 26px; height: 26px; border-radius: 50%; background: conic-gradient(#00e5ff, #00ff40, #f0f000, #ff3000, #ff0060, #c000ff, #1000ff, #00e5ff); }
.col-more { width: 12px; margin-right: -3px; transform: scaleX(.75); flex: none; }
.tree-rows { padding-top: 1px; }
.tree-rows li { height: 46.800px; display: flex; align-items: center; padding-right: 49px; }
.tree-rows .caret { width: 13px; height: 8px; fill: #fff; margin-right: 16px; }
.tree-rows .ico { height: 31px; }
.w36 { width: 36px; } .w29 { width: 29px; } .w32 { width: 32px; } .w24 { width: 24px; }
.lv0 { padding-left: 13px; } .lv1 { padding-left: 53px; } .lv2 { padding-left: 93px; } .lv3 { padding-left: 174px; }
.lv3 .ico + .ico { margin-left: 12px; }
.name { margin-left: 15px; width: 700px; margin-right: -700px; line-height: 46px; }
.lv1 .name { margin-left: 22px; }
.lv2 .name { margin-left: 21px; }
.long { transform: scaleX(.897); }
.strong { transform: scaleX(1.021); -webkit-text-stroke: 1.300px #f2f2f2; }
.swatch { width: 29px; height: 29px; border: 2px solid #000; margin-left: auto; flex: none; }
.green { background: #0f0; } .sand { background: #f5d774; } .yellow { background: #ff0; }
.hscroll { margin-top: auto; height: 29px; background: #333; display: flex; justify-content: space-between; flex: none; }
.hscroll span { background: #666; display: flex; align-items: center; }
.hscroll svg { width: 14px; height: 17px; stroke: #fff; stroke-width: 3.500px; margin-left: 7px; }
.thumb { width: 219px; } .end { width: 28px; }
.splitter { height: 26px; background: #333; display: flex; justify-content: space-between; padding: 4px 15px 0 0; }
.splitter svg { width: 14px; height: 17px; stroke: #ccc; stroke-width: 2px; }
.dots { display: flex; gap: 13px; padding-left: 33px; }
.dots i { width: 5px; height: 5px; background: #aaa; }
.props { height: 527px; background: #333; border: 2px solid #8a8a8a; }
.props-head { height: 50px; border-bottom: 2px solid #8a8a8a; display: flex; font-size: 34px; line-height: 52px; }
.props-head span { padding-left: 6px; }
.props-head span:first-child { width: 144px; border-right: 2px solid #8a8a8a; padding-left: 7px; }

.stage { width: 3185px; flex: none; }
.viewport { height: 1112px; position: relative; display: flex; flex-direction: column; justify-content: space-between; padding-bottom: 34px; }
.view-tools { display: flex; align-items: flex-end; justify-content: flex-end; padding: 14px 10px 0 0; }
.view-tools svg { stroke: #a5a5a5; stroke-width: 2.500px; }
.vt-grid { width: 38px; height: 44px; }
.vt-move { width: 35px; height: 35px; margin: 0 12px 7px 17px; }
.vt-win { width: 40px; height: 28px; margin-bottom: 7px; }
.view-tools .vt-win { stroke: #5c5c5c; } .vt-win .solid { fill: #5c5c5c; }
.view-bar { display: flex; padding-left: 34px; }
.view-bar .ico { width: 83.500px; height: 67.200px; }

/* scene objects on the 3D canvas */
.triad { position: absolute; left: 74.800px; top: 745.600px; width: 134.400px; height: 194.900px; }
.triad path { vector-effect: non-scaling-stroke; }
.wire { stroke: #9c9c9c; stroke-width: 2px; }
.cube-text { fill: #f4f4f4; font-size: 32px; letter-spacing: -3px; }
.axis { position: absolute; font-size: 36px; line-height: 40px; }
.axis-z { left: 84px; top: 748px; }
.axis-x { left: 171px; top: 902px; }
.cell { position: absolute; left: 1462.600px; top: 71.600px; width: 259.700px; height: 867.100px; }
.cell path, .cell use { vector-effect: non-scaling-stroke; }
.mesh { stroke: #6e6c00; stroke-width: 1.800px; fill: none; opacity: .85; }

/* panels */
.panel-tabs { height: 56px; }
.panel-tabs .tab-shape { width: 3160px; height: 56px; }
.panel-tabs .tab-labels { line-height: 63px; padding-left: 12px; }
.t-tcl { width: 98.500px; } .t-log { width: 239px; letter-spacing: .1px; } .t-hwc { width: 124px; } .t-panels { line-height: 59px; }
.panel { height: 523px; display: flex; align-items: flex-start; font-family: "Noto Sans", sans-serif; font-size: 36.500px; line-height: 48px; }
.panel > .close { margin: 7px 15px 0 11px; }
.cellbox { border: 2px solid #777; background: #333; display: flex; justify-content: center; flex: none; }
.selector { display: flex; height: 53px; margin-top: 36px; }
.selector svg { fill: #f4f4f4; }
.pick { width: 89px; padding-top: 17px; }
.pick svg, .sel svg { width: 28px; height: 15px; }
.entity { width: 449px; background: #007bab; border: 5px solid #0ff; line-height: 41px; padding-left: 7px; }
.reset { width: 90px; justify-content: flex-start; padding: 10px 0 0 25px; }
.reset svg { width: 32px; height: 28px; }
.params { width: 1004px; margin-left: 650px; margin-top: 36px; display: flex; flex-direction: column; white-space: nowrap; }
.row { display: flex; height: 53.300px; }
.tol { padding-left: 64px; }
.tol .cellbox { width: 472px; line-height: 45px; height: 53px; padding-left: 9px; }
.tol .value { width: 468px; background: #232323; justify-content: flex-end; padding-right: 4px; line-height: 49px; }
.destroy { line-height: 49px; }
.checkbox { width: 41px; height: 41px; border: 2px solid #808080; margin: 6px 25px 0 0; }
.opt { padding-left: 66px; line-height: 48px; }
.caption { width: 341px; }
.opt .cellbox { height: 53.300px; line-height: 47px; }
.sel { width: 86px; align-items: center; }
.sel svg { fill: #f4f4f4; }
.sel .toggle { width: 20px; height: 28px; }
.pickval { width: 428px; margin-left: -1px; padding-left: 9px; }
.actions { width: 767px; margin: 35px 0 0 44px; display: flex; flex-direction: column; align-items: flex-end; }
.actions button { width: 767px; height: 53.400px; background: #25ab25; border: solid #808080; border-width: 0 2px 2px 0; line-height: 50px; padding: 0 0 1px 11px; flex: none; }
.actions .return { width: 255px; background: #b43a3c; border-color: #963032; padding: 2px 2px 3px; }
.return span { display: block; border: 2px solid #f4e8e8; height: 46px; line-height: 42px; padding-left: 10px; }
.vscroll { width: 26px; height: 514px; margin: 4px 0 0 14px; background: #333; display: flex; flex-direction: column; justify-content: space-between; }
.vscroll span { background: #666; display: flex; justify-content: center; }
.vscroll svg { width: 16px; height: 12px; stroke: #fff; stroke-width: 4px; margin-top: 8px; }
.track { height: 480px; } .down { height: 26px; }

/* status bar */
.status { height: 57px; display: flex; position: relative; line-height: 62px; }
.message { white-space: pre; width: 3166px; padding-left: 13px; letter-spacing: -.15px; }
.current { display: flex; width: 425px; letter-spacing: -.15px; }
.current .ico { width: 37px; height: 36px; margin: 11px 1px 0 0; }
.fire { width: 34px; height: 33px; margin-top: 14px; }
.cross { width: 56px; height: 43px; border-left: 2px solid #777; padding: 6px 0 6px 24px; margin: 7px 0 0 402px; stroke: #b0b0b0; stroke-width: 4px; }

/* numbered callouts */
.mark { position: absolute; border: 16px solid #f00; }
.box1 { left: 1435px; top: 132px; width: 203px; height: 225px; }
.box2 { left: 1022px; top: 1608px; width: 491px; height: 102px; }
.box3 { left: 2300px; top: 479px; width: 402px; height: 932px; }
.box4 { left: 3259px; top: 1613px; width: 809px; height: 92px; }
.step { position: absolute; width: 161px; height: 165px; border-radius: 50%; background: rgba(242, 242, 242, .8); color: #f00; font-size: 64px; font-weight: bold; line-height: 167px; text-align: center; }
.step1 { left: 1575px; top: 321px; font-family: Roboto, sans-serif; }
.step2 { left: 1456px; top: 1661px; }
.step3 { left: 2657px; top: 1348px; }
.step4 { left: 3151px; top: 1482px; }
```
